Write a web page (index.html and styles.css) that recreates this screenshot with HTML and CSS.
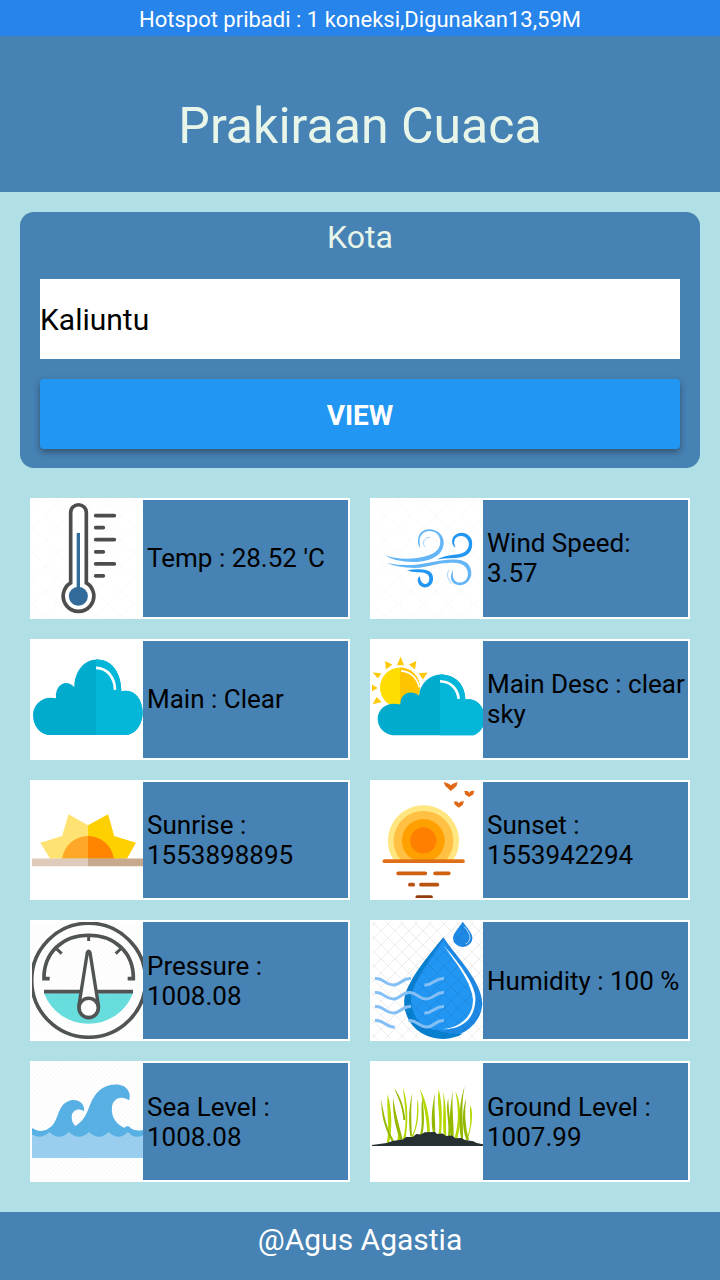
FILE: index.html
```html
<!DOCTYPE html>
<html lang="id">
<head>
<meta charset="utf-8">
<meta name="viewport" content="width=device-width, initial-scale=1">
<title>Prakiraan Cuaca</title>
<link rel="stylesheet" href="styles.css">
</head>
<body>
<div class="status">Hotspot pribadi : 1 koneksi,Digunakan13,59M</div>
<header class="header"><h1 class="title">Prakiraan Cuaca</h1></header>
<main class="main">
  <form class="search">
    <label class="search-label" for="city">Kota</label>
    <input class="search-input" id="city" type="text" value="Kaliuntu">
    <button class="search-button" type="button">VIEW</button>
  </form>
  <section class="grid">
    <article class="card">
      <svg class="icon" viewBox="36 30 333 351" preserveAspectRatio="xMidYMid slice" aria-hidden="true">
        <defs>
          <pattern id="mesh" width="76" height="76" patternUnits="userSpaceOnUse"><path d="M0 0L76 76M76 0L0 76" stroke="#f3f3f3" stroke-width="2" stroke-dasharray="14 5"/></pattern>
          <pattern id="net" width="42" height="42" patternUnits="userSpaceOnUse"><path d="M0 0L42 42M42 0L0 42" stroke="#000" stroke-opacity=".07" stroke-width="3"/></pattern>
          <pattern id="hatch" width="14" height="14" patternUnits="userSpaceOnUse"><path d="M-2 16L16 -2M-2 2L2 -2M12 16L16 12" stroke="#000" stroke-opacity=".04" stroke-width="2.500"/></pattern>
        </defs>
        <path fill="url(#mesh)" d="M36 30h333v351H36z"/>
        <path d="M152 279V68a23.500 23.500 0 0 1 47 0V279A46 46 0 1 1 152 279Z" fill="#fff" stroke="#4d4d4d" stroke-width="11"/>
        <path d="M175 129V300" stroke="#336b9b" stroke-width="10"/>
        <circle cx="175" cy="319" r="28.500" fill="#336b9b"/>
        <path d="M227 77h56M227 113h23M227 149h56M227 186h23M227 222h56M227 258h23" stroke="#4d4d4d" stroke-width="11" stroke-linecap="round"/>
      </svg>
      <p class="text">Temp : 28.52 'C</p>
    </article>
    <article class="card">
      <svg class="icon" viewBox="36 30 333 351" preserveAspectRatio="xMidYMid slice" aria-hidden="true">
        <path fill="url(#mesh)" d="M36 30h333v351H36z"/>
        <path fill="#64b5f6" d="M74 195Q112 210 166 205C217 199 241 184 241 155C241 125 205 113 186 133C176 144 178 158 181 174C171 166 172 144 180 131C200 105 251 120 251 158C251 191 222 213 172 216Q105 218 74 195Z"/>
        <path fill="#64b5f6" d="M81 219Q130 229 173 224C211 218 241 210 276 209C312 207 333 221 334 248C335 280 300 297 279 278C270 268 272 250 279 240C276 260 281 278 300 278C318 278 326 261 323 245C317 220 291 218 266 219C222 220 206 233 164 234Q111 233 81 219Z"/>
        <path fill="#2196f3" d="M230 209Q253 197 288 194C320 192 329 172 326 157C321 137 297 133 286 146C280 156 283 165 287 173C275 168 273 150 281 140C296 119 331 128 336 153C340 183 325 203 286 204Q249 204 230 209Z"/>
        <path fill="#2196f3" d="M141 241Q171 236 189 239C211 241 221 251 219 270C215 297 181 300 174 277C172 268 174 263 180 259C180 286 206 290 208 267C209 250 191 247 173 247Q154 247 141 241Z"/>
        <path d="M211 142C188 143 187 162 195 171M268 240C258 250 263 269 274 281" stroke="#90c8f6" stroke-width="2.500" fill="none"/>
      </svg>
      <p class="text">Wind Speed: 3.57</p>
    </article>
    <article class="card">
      <svg class="icon" viewBox="36 33 333 351" preserveAspectRatio="xMidYMid slice" aria-hidden="true">
        <path fill="#00abcd" d="M83 315C56 310 39 286 39 254C40 222 69 196 108 205C104 167 136 144 163 171C164 122 194 89 231 89C274 90 303 126 304 184C340 175 367 204 368 247C368 282 349 309 323 315Z"/>
        <path fill="#04b6d8" d="M228 89C274 87 303 126 304 184C340 175 367 204 368 247C368 282 349 309 323 315H228Z"/>
        <path d="M228 114C263 115 284 143 285 180" stroke="#fff" stroke-width="8" fill="none"/>
      </svg>
      <p class="text">Main : Clear</p>
    </article>
    <article class="card">
      <svg class="icon" viewBox="36 33 333 351" preserveAspectRatio="xMidYMid slice" aria-hidden="true">
        <g fill="#ffc908"><path d="M111 106L122 80L132 106ZM75 93L97 104L78 119ZM169 93L147 104L165 119ZM38 128L64 130L54 146ZM203 128L176 130L189 149ZM36 164L53 174L36 184ZM38 223L50 201L65 216Z"/></g>
        <circle cx="120" cy="173" r="60" fill="#fd0"/>
        <path d="M120 113A60 60 0 0 1 180 173A60 60 0 0 1 120 233Z" fill="#ffc400"/>
        <path d="M123 123C157 126 171 145 178 172" stroke="#fff" stroke-width="5" fill="none"/>
        <path fill="#00abcd" d="M98 316C70 311 53 293 53 265C54 236 82 213 121 224C120 190 153 178 177 197C181 158 210 134 245 134C287 136 315 164 316 209C344 203 370 224 374 259C377 288 360 308 340 316Z"/>
        <path fill="#04b6d8" d="M240 134C286 134 315 164 316 209C344 203 370 224 374 259C377 288 360 308 340 316H240Z"/>
        <path d="M240 154C273 155 293 177 296 207" stroke="#fff" stroke-width="8" fill="none"/>
      </svg>
      <p class="text">Main Desc : clear sky</p>
    </article>
    <article class="card">
      <svg class="icon" viewBox="36 36 333 348" preserveAspectRatio="xMidYMid slice" aria-hidden="true">
        <path fill="#ffe272" d="M204 165L146 132L127 197L62 217L91 265H204Z"/>
        <path fill="#ffd000" d="M204 165L264 132L282 197L347 217L320 265H204Z"/>
        <path fill="#ffa726" d="M204 197A77 77 0 0 0 127 265H204Z"/>
        <path fill="#ff8500" d="M204 197A77 77 0 0 1 281 265H204Z"/>
        <path fill="#dfcbbb" d="M36 264H204V287H36Z"/><path fill="#c7aa8d" d="M204 264H369V287H204Z"/>
      </svg>
      <p class="text">Sunrise : 1553898895</p>
    </article>
    <article class="card">
      <svg class="icon" viewBox="36 36 333 348" preserveAspectRatio="xMidYMid slice" aria-hidden="true">
        <path fill="#ffe680" d="M101 268A106 106 0 1 1 280 268Z"/>
        <path fill="#ffc043" d="M122 268A89 89 0 1 1 259 268Z"/>
        <path fill="#ffa000" d="M162 268A64 64 0 1 1 218 268Z"/>
        <circle cx="190" cy="210" r="39" fill="#ff8000"/>
        <g stroke-linecap="round" stroke-width="11" fill="none"><path stroke="#df7017" d="M74 272H308"/><path stroke="#d0620f" d="M115 308H196M225 308H266"/><path stroke="#b85310" d="M150 342H160M183 342H232"/><path stroke="#923d09" d="M172 379H213"/></g>
        <g fill="#df6816"><path d="M251 36L266 41L272 46L278 41L292 36L289 48L272 63L255 47Z"/><path d="M312 63L322 63L327 68L332 63L342 62L339 73L326 81L315 73Z"/><path d="M281 94L291 94L296 99L301 94L311 93L308 104L296 113L284 104Z"/></g>
      </svg>
      <p class="text">Sunset : 1553942294</p>
    </article>
    <article class="card">
      <svg class="icon" viewBox="36 36 333 351" preserveAspectRatio="xMidYMid slice" aria-hidden="true">
        <circle cx="206" cy="211" r="171" fill="#fff" stroke="#505454" stroke-width="11"/>
        <path fill="#68dede" d="M72 250H339A143 143 0 0 1 72 250Z"/>
        <path d="M89 206H72C71 128 128 76 206 76S341 128 340 206H323M72 245H339" stroke="#505454" stroke-width="11" fill="none"/>
        <path d="M206 80V93M110 117L125 131M302 117L287 131" stroke="#505454" stroke-width="9"/>
        <path d="M177 285L202 128Q206 119 210 128L235 285Z" fill="#fff" stroke="#505454" stroke-width="10"/>
        <circle cx="206" cy="294" r="29" fill="#fff" stroke="#505454" stroke-width="11"/>
        <path fill="url(#hatch)" d="M36 36h333v351H36z"/>
      </svg>
      <p class="text">Pressure : 1008.08</p>
    </article>
    <article class="card">
      <svg class="icon" viewBox="36 36 333 351" preserveAspectRatio="xMidYMid slice" aria-hidden="true">
        <path fill="#1e88e5" d="M250 82C286 137 367 215 367 282A117 105 0 0 1 133 273C137 214 213 130 250 82Z"/>
        <path fill="#0780cf" d="M250 82C213 130 137 214 133 273C132 344 187 387 250 387Q285 386 310 371C219 377 153 336 153 265C156 213 216 145 250 82Z"/>
        <path fill="#2196f3" d="M250 94C278 140 342 215 342 276C341 330 305 360 253 360Q205 366 174 332C153 303 148 266 160 240C176 192 217 150 250 94Z"/>
        <path fill="#fff" d="M251 107Q339 205 346 260C350 319 312 359 249 358C307 350 338 318 339 270C336 220 290 162 251 107Z"/>
        <path fill="#1e88e5" d="M308 35C319 52 338 70 337 85A29 26 0 0 1 279 85C280 68 298 53 308 35Z"/>
        <path d="M313 50Q331 72 330 85Q328 98 316 103" stroke="#b5dcfa" stroke-width="3" fill="none"/>
        <path fill="url(#net)" d="M36 36h333v351H36z"/>
        <g stroke="#84bff5" stroke-width="9" fill="none"><path d="M45 206C72 203 73 225 99 225S125 204 153 206M193 225C221 227 223 204 252 206M45 248C72 245 73 267 99 267S125 246 150 248S174 267 199 267S226 246 252 248M45 290C72 287 73 309 99 309S125 288 153 290M193 309C221 311 223 288 252 290M45 332C72 329 77 352 104 352M145 332C173 330 175 351 200 351S225 330 252 332"/></g>
      </svg>
      <p class="text">Humidity : 100 %</p>
    </article>
    <article class="card">
      <svg class="icon" viewBox="36 39 333 351" preserveAspectRatio="xMidYMid slice" aria-hidden="true">
        <path fill="#9bcff0" d="M36 245H369V324H36Z"/>
        <path fill="#58b1e5" d="M36 234C58 248 77 245 94 230C119 206 110 164 152 151C178 146 195 163 192 184C178 174 161 179 156 193C153 209 158 221 166 228C209 202 201 166 229 131C251 105 286 98 312 109C328 119 333 138 327 151C308 137 280 142 276 170C272 205 293 226 314 234C320 226 329 229 333 236Q350 245 369 240V256Q345 269 324 246Q295 275 266 246Q236 275 207 246Q177 275 147 246Q117 275 88 246Q64 270 36 254Z"/>
        <path fill="url(#hatch)" d="M36 39h333v351H36z"/>
      </svg>
      <p class="text">Sea Level : 1008.08</p>
    </article>
    <article class="card">
      <svg class="icon" viewBox="36 39 333 351" preserveAspectRatio="xMidYMid slice" aria-hidden="true">
        <g fill="#b5d900"><path d="M80 280C91 230 78 180 83 133C96 180 98 240 87 280ZM128 270C145 220 133 160 129 113C145 160 145 220 136 270ZM202 255C201 205 190 160 180 117C198 150 212 205 209 255ZM235 255C244 210 229 160 236 118C247 160 247 210 243 255ZM283 266C299 220 294 160 286 125C303 150 305 220 292 266ZM316 270C341 230 325 190 332 166C342 200 331 245 323 270ZM152 265C176 225 169 180 173 145C181 200 169 240 157 265ZM252 260C245 210 255 160 248 125C261 160 257 220 259 260ZM112 275C121 225 96 190 100 150C102 190 125 230 122 275Z"/></g>
        <g fill="#94b800"><path d="M96 276C69 225 64 190 64 149C72 200 82 240 102 273ZM121 270C101 220 98 180 100 142C105 190 118 230 128 267ZM151 260C144 210 148 160 157 129C151 170 155 230 156 260ZM180 255C191 215 180 180 187 145C192 180 195 220 187 255ZM219 250C211 210 217 165 225 130C221 170 226 210 226 250ZM273 260C264 215 272 165 279 117C274 165 282 220 281 260ZM303 267C293 210 300 150 314 108C301 170 311 230 309 267ZM320 272C303 230 307 175 319 145C313 180 315 230 327 270ZM130 210C128 165 111 140 103 114C121 140 134 175 136 210ZM264 260C270 215 254 180 265 145C265 180 273 220 271 260Z"/></g>
        <path fill="#263033" d="M36 285L80 279L98 273L130 268L138 261L158 261L169 252L183 254L194 247L225 246L231 252L248 251L258 258L276 257L286 265L304 264L315 270L340 274L350 279L369 283V288H36Z"/>
      </svg>
      <p class="text">Ground Level : 1007.99</p>
    </article>
  </section>
</main>
<footer class="footer">@Agus Agastia</footer>
</body>
</html>
```
FILE: styles.css
```css
* {
  box-sizing: border-box;
}

body {
  margin: 0;
  min-height: 100vh;
  display: flex;
  flex-direction: column;
  background: #b0e0e6;
  color: #000;
  font-family: Roboto, sans-serif;
}

.status {
  height: 36px;
  padding-top: 2px;
  background: #2684ea;
  color: #fff;
  font-size: 22px;
  line-height: 36px;
  text-align: center;
}

.header {
  padding: 60px 20px 36px;
  background: #4682b4;
}

.title {
  margin: 0;
  color: #e8f5e9;
  font-size: 50px;
  font-weight: 400;
  line-height: 60px;
  text-align: center;
}

.main {
  flex: 1;
  display: flex;
  flex-direction: column;
  gap: 30px;
  padding: 20px 20px 30px;
}

.search {
  display: flex;
  flex-direction: column;
  gap: 20px;
  padding: 5px 20px 19px;
  border-radius: 14px;
  background: #4682b4;
}

.search-label {
  padding-bottom: 2px;
  color: #e8f5e9;
  font-size: 32px;
  line-height: 40px;
  text-align: center;
}

.search-input {
  width: 100%;
  height: 80px;
  padding: 0;
  border: 0;
  background: #fff;
  color: #000;
  font: 30px Roboto, sans-serif;
}

.search-button {
  height: 70px;
  padding: 2px 0 0;
  border: 0;
  border-radius: 4px;
  background: #2196f3;
  box-shadow: 0 3px 6px rgba(40, 50, 60, 0.6);
  color: #fff;
  font: bold 28px Roboto, sans-serif;
}

.grid {
  flex: 1;
  display: grid;
  grid-template-columns: 1fr 1fr;
  grid-auto-rows: 1fr;
  gap: 20px;
  padding: 0 10px;
}

.card {
  display: flex;
  align-items: center;
  min-height: 120px;
  border: 2px solid #fff;
  background: #4682b4;
}

.icon {
  flex: none;
  align-self: stretch;
  contain: size;
  width: 111px;
  height: auto;
  background: #fff;
}

.text {
  margin: 0;
  padding: 0 2px 0 4px;
  font-size: 26px;
  line-height: 30px;
}

.footer {
  padding: 8px 20px 20px;
  background: #4682b4;
  color: #fff;
  font-size: 30px;
  line-height: 40px;
  text-align: center;
}
```
